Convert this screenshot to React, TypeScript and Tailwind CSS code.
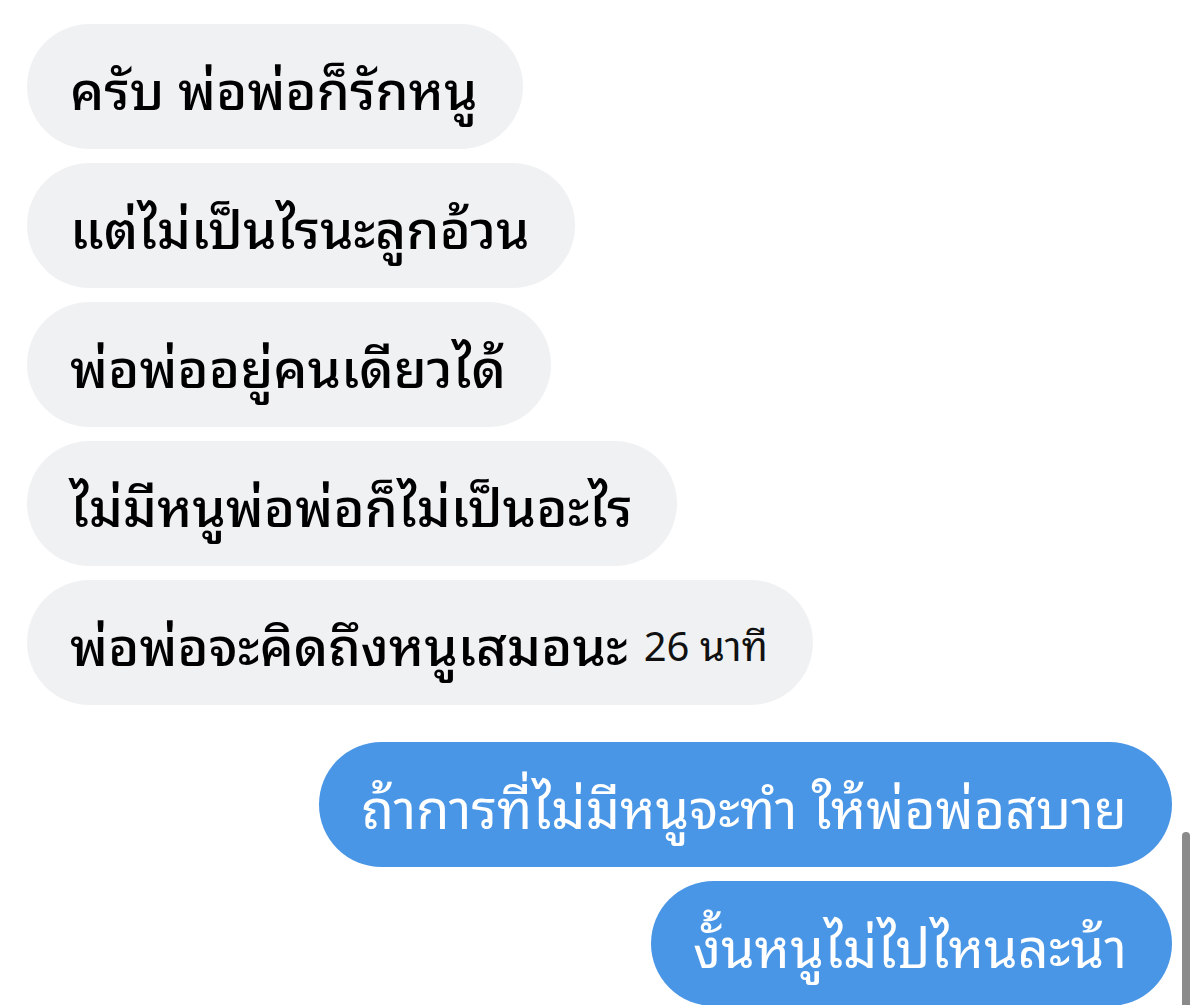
const incoming = [
  'ครับ พ่อพ่อก็รักหนู',
  'แต่ไม่เป็นไรนะลูกอ้วน',
  'พ่อพ่ออยู่คนเดียวได้',
  'ไม่มีหนูพ่อพ่อก็ไม่เป็นอะไร',
];

const outgoing = ['ถ้าการที่ไม่มีหนูจะทำ ให้พ่อพ่อสบาย', 'งั้นหนูไม่ไปไหนละน้า'];

export default function App() {
  return (
    <div
      className="relative h-[1005px] w-[1200px] overflow-hidden bg-white pt-[24px]"
      style={{ fontFamily: '"Noto Sans Thai Looped", Loma, Garuda, Waree, "Noto Sans Thai", "Noto Sans", sans-serif' }}
    >
      <div className="flex flex-col items-start gap-[14px] pl-[27px]">
        {incoming.map((t) => (
          <div
            key={t}
            className="flex h-[125px] items-center rounded-full bg-[#eff1f3] pl-[43px] pr-[45px] text-[53px] font-medium text-black"
          >
            {t}
          </div>
        ))}
        <div className="flex h-[125px] items-center rounded-full bg-[#eff1f3] pl-[43px] pr-[45px] text-black">
          <span className="text-[53px] font-medium">พ่อพ่อจะคิดถึงหนูเสมอนะ</span>
          <span className="ml-[16px] text-[40px] text-[#111]">26 นาที</span>
        </div>
      </div>
      <div className="mt-[37px] flex flex-col items-end gap-[14px] pr-[28px]">
        {outgoing.map((t) => (
          <div
            key={t}
            className="flex h-[125px] items-center rounded-full bg-[#4a96e6] pl-[42px] pr-[45px] text-[54px] text-white"
          >
            {t}
          </div>
        ))}
      </div>
      <div className="absolute right-[10px] top-[832px] h-[200px] w-[8px] rounded-full bg-[#8a8a8a]" />
    </div>
  );
}
